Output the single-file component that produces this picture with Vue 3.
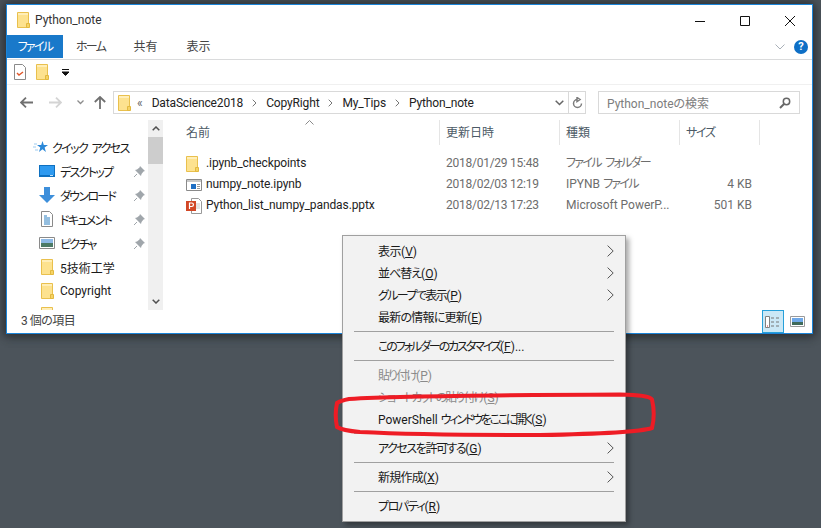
<template>
  <div class="desktop">
    <svg class="defs" width="0" height="0">
      <symbol id="folder" viewBox="0 0 13 16">
        <path d="M.5.5h11v15H.5z" fill="#fde28f" stroke="#e9c04d" />
        <path d="M1 1h10v2H1z" fill="#ffeeb8" />
        <path d="M9.5 15.5v-4h3v4z" fill="#f6d365" stroke="#e2b93f" />
      </symbol>
    </svg>

    <div class="window">
      <div class="titlebar">
        <svg class="title-folder" width="13" height="16"><use href="#folder" /></svg>
        <span class="title-text">Python_note</span>
        <div class="caption">
          <svg width="12" height="12" viewBox="0 0 12 12"><path d="M1 6.5h10" stroke="#111" /></svg>
          <svg width="12" height="12" viewBox="0 0 12 12"><path d="M1.5 1.5h9v9h-9z" fill="none" stroke="#111" /></svg>
          <svg width="12" height="12" viewBox="0 0 12 12"><path d="M1 1l10 10M11 1L1 11" stroke="#111" /></svg>
        </div>
      </div>

      <div class="tabs">
        <div class="tab tab-file kana">ファイル</div>
        <div class="tab tab-home kana">ホーム</div>
        <div class="tab tab-share">共有</div>
        <div class="tab tab-view">表示</div>
        <svg class="ribbon-toggle" width="10" height="6" viewBox="0 0 10 6"><path d="M.5.5L5 5 9.5.5" fill="none" stroke="#a9b0b8" /></svg>
        <div class="help">?</div>
      </div>

      <div class="qat">
        <svg width="12" height="16" viewBox="0 0 12 16">
          <path d="M.5.5h8l3 3v12H.5z" fill="#fff" stroke="#8a8a8a" />
          <path d="M3 9l2 2 4-3" fill="none" stroke="#e0572a" stroke-width="1.4" />
        </svg>
        <svg class="qat-folder" width="13" height="16"><use href="#folder" /></svg>
        <svg class="qat-drop" width="7" height="7" viewBox="0 0 7 7"><path d="M0 .5h7M0 3h7l-3.5 3.5z" stroke="#111" fill="#111" /></svg>
      </div>

      <div class="navbar">
        <svg class="nav-back" width="13" height="11" viewBox="0 0 13 11"><path d="M6 .7L1 5.500l5 4.800M1 5.500h12" fill="none" stroke="#707070" stroke-width="1.800" /></svg>
        <svg class="nav-forward" width="13" height="11" viewBox="0 0 13 11"><path d="M7 .7l5 4.800-5 4.800M12 5.500H0" fill="none" stroke="#d4d4d4" stroke-width="1.800" /></svg>
        <svg class="nav-recent" width="7" height="5" viewBox="0 0 7 5"><path d="M.5.5l3 3 3-3" fill="none" stroke="#8c8c8c" stroke-width="1.300" /></svg>
        <svg class="nav-up" width="12" height="13" viewBox="0 0 12 13"><path d="M.8 6L6 1l5.200 5M6 1v12" fill="none" stroke="#707070" stroke-width="1.800" /></svg>

        <div class="address">
          <svg class="addr-folder" width="13" height="16"><use href="#folder" /></svg>
          <span class="addr-more">«</span>
          <template v-for="(part, i) in crumbs" :key="part">
            <svg v-if="i" width="5" height="8" viewBox="0 0 5 8"><path d="M.7.7L4 4 .7 7.300" fill="none" stroke="#777" /></svg>
            <span class="crumb">{{ part }}</span>
          </template>
          <svg class="addr-drop" width="9" height="6" viewBox="0 0 9 6"><path d="M.7.7l3.800 3.800L8.300.7" fill="none" stroke="#666" stroke-width="1.500" /></svg>
          <div class="addr-refresh">
            <svg width="11" height="12" viewBox="0 0 11 12"><path d="M5.500 2.500a4 4 0 1 0 4 4M5 .5v4l3-2z" fill="none" stroke="#7c7c7c" stroke-width="1.500" /></svg>
          </div>
        </div>

        <div class="search">
          <span>Python_noteの検索</span>
          <svg width="12" height="12" viewBox="0 0 12 12"><circle cx="7.500" cy="4.500" r="3.200" fill="none" stroke="#666" stroke-width="1.500" /><path d="M5 7l-4 4" stroke="#666" stroke-width="2" /></svg>
        </div>
      </div>

      <div class="main">
        <div class="nav-pane">
          <div class="tree">
            <div class="tree-head">
              <svg width="16" height="14" viewBox="0 0 16 14"><path d="M9.500 1l1.300 4H15l-3.400 2.600 1.300 4.400-3.400-2.700L6 12l1.300-4.400L4 5h4.200z" fill="#2b88d8" /><path d="M1 4h3M0 7h3M2 10h3" stroke="#9ccbf0" /></svg>
              <span class="quick">クイック アクセス</span>
            </div>
            <div v-for="item in tree" :key="item.label" class="tree-item">
              <span class="tree-icon">
                <svg v-if="item.icon === 'desktop'" width="16" height="12" viewBox="0 0 16 12"><path d="M0 0h16v12H0z" fill="#0e70c0" /><path d="M1 1h14v9H1z" fill="#2e9af0" /><path d="M11 10.500h3" stroke="#bfe0f8" /></svg>
                <svg v-else-if="item.icon === 'download'" width="16" height="16" viewBox="0 0 16 16"><path d="M5 0h6v8h5l-8 8-8-8h5z" fill="#3d8fdb" /></svg>
                <svg v-else-if="item.icon === 'docs'" width="12" height="16" viewBox="0 0 12 16"><path d="M.5.5h8l3 3v12H.5z" fill="#fff" stroke="#8a8a8a" /><path d="M3 5h3M3 7h6M3 9h6M3 11h6M3 13h6" stroke="#2a7fc0" /></svg>
                <svg v-else-if="item.icon === 'pictures'" width="16" height="12" viewBox="0 0 16 12"><path d="M.5.5h15v11H.5z" fill="#fff" stroke="#8a8a8a" /><path d="M2 2h12v4H2z" fill="#8db9e6" /><path d="M2 6h12v4H2z" fill="#4c7a66" /></svg>
                <svg v-else width="13" height="16"><use href="#folder" /></svg>
              </span>
              <span class="tree-label" :class="{ kana: item.pinned }">{{ item.label }}</span>
              <svg v-if="item.pinned" class="pin" width="11" height="11" viewBox="0 0 11 11"><path d="M6 0l5 5-1.500.5L7.500 8 7 10 1 4l2-.5L5.500 1.500z" fill="#a0a6ab" /><path d="M3 8L0 11" stroke="#a0a6ab" /></svg>
            </div>
            <div class="tree-item">
              <span class="tree-icon"><svg width="13" height="16"><use href="#folder" /></svg></span>
            </div>
          </div>
          <div class="scrollbar">
            <div class="scroll-btn"><svg width="8" height="5" viewBox="0 0 8 5"><path d="M.7 4.300L4 1l3.300 3.300" fill="none" stroke="#505050" stroke-width="1.500" /></svg></div>
            <div class="scroll-thumb"></div>
            <div class="scroll-space"></div>
            <div class="scroll-btn"><svg width="8" height="5" viewBox="0 0 8 5"><path d="M.7.7L4 4 7.300.7" fill="none" stroke="#505050" stroke-width="1.500" /></svg></div>
          </div>
        </div>

        <div class="files">
          <svg class="sort" width="9" height="5" viewBox="0 0 9 5"><path d="M.5 4.500l4-4 4 4" fill="none" stroke="#8a8a8a" /></svg>
          <div class="file-head">
            <div class="col-name">名前</div>
            <div>更新日時</div>
            <div>種類</div>
            <div class="head-size">サイズ</div>
          </div>
          <div v-for="file in files" :key="file.name" class="file-row">
            <div class="col-name">
              <span class="file-icon">
                <svg v-if="file.icon === 'folder'" width="13" height="16"><use href="#folder" /></svg>
                <svg v-else-if="file.icon === 'ipynb'" width="16" height="12" viewBox="0 0 16 12"><path d="M.5.5h15v11H.5z" fill="#fff" stroke="#8a8a8a" /><path d="M1 1h14v2H1z" fill="#c9c9c9" /><path d="M5 5h5v5H5z" fill="#1f6fc4" /><path d="M11 5.500h3M11 7.500h3M11 9.500h3" stroke="#999" /></svg>
                <svg v-else width="16" height="16" viewBox="0 0 16 16"><path d="M5.500.5h7l3 3v12h-10z" fill="#fff" stroke="#999" /><path d="M10 6h4M10 8h4M10 10h4" stroke="#c9c9c9" /><path d="M0 3h10v10H0z" fill="#d24726" /><path d="M3.500 11V5h2.200a1.500 1.500 0 0 1 0 3.500H3.500" fill="none" stroke="#fff" stroke-width="1.200" /></svg>
              </span>
              <span class="file-name">{{ file.name }}</span>
            </div>
            <div class="col-date">{{ file.date }}</div>
            <div>{{ file.typeLatin }}<span :class="{ kana: file.icon !== 'pptx' }">{{ file.type }}</span></div>
            <div class="col-size">{{ file.size }}</div>
          </div>
        </div>
      </div>

      <div class="status">
        <span class="status-count">3 個の項目</span>
        <div class="view-btn view-active">
          <svg width="16" height="12" viewBox="0 0 16 12"><path d="M.5.500h4v11h-4z" fill="#fff" stroke="#808080" /><path d="M6 2h3M11 2h3M6 6h3M11 6h3M6 10h3M11 10h3" stroke="#777" /><path d="M2 9.500h1v1H2z" fill="#c33" /></svg>
        </div>
        <div class="view-btn">
          <svg width="15" height="11" viewBox="0 0 15 11"><path d="M.5.500h14v10H.5z" fill="#fff" stroke="#9a9a9a" /><path d="M2 2h11v4H2z" fill="#6fa8e8" /><path d="M2 6h11v3H2z" fill="#3f6a5a" /></svg>
        </div>
      </div>
    </div>

    <div class="menu">
      <template v-for="(entry, i) in menu" :key="i">
        <div v-if="entry.sep" class="menu-sep"></div>
        <div v-else class="menu-item" :class="{ disabled: entry.disabled }">
          <span class="menu-label">{{ entry.latin }}<span :style="{ letterSpacing: entry.ls + 'px' }">{{ entry.label }}</span>(<u>{{ entry.key }}</u>){{ entry.tail }}</span>
          <svg v-if="entry.sub" class="menu-arrow" width="7" height="12" viewBox="0 0 7 12"><path d="M.6.600L6.200 6 .6 11.400" fill="none" stroke="#555" /></svg>
        </div>
      </template>
    </div>

    <svg class="marker" width="821" height="528" viewBox="0 0 821 528">
      <path d="M349 399C400 396 520 395 620 394.500C640 395 650 396 652 399.500C654 408 654 420 652 428C640 432 600 434 540 435C470 435 400 434 360 432C348 431 340 429 337 427C335.500 420 335.500 410 337 403C340 401 344 400 349 399Z" fill="none" stroke="#ee1c25" stroke-width="4" />
    </svg>
  </div>
</template>

<script setup>
const crumbs = ['DataScience2018', 'CopyRight', 'My_Tips', 'Python_note']

const tree = [
  { label: 'デスクトップ', icon: 'desktop', pinned: true },
  { label: 'ダウンロード', icon: 'download', pinned: true },
  { label: 'ドキュメント', icon: 'docs', pinned: true },
  { label: 'ピクチャ', icon: 'pictures', pinned: true },
  { label: '5技術工学', icon: 'folder' },
  { label: 'Copyright', icon: 'folder' },
]

const files = [
  { name: '.ipynb_checkpoints', date: '2018/01/29 15:48', type: 'ファイル フォルダー', size: '', icon: 'folder' },
  { name: 'numpy_note.ipynb', date: '2018/02/03 12:19', typeLatin: 'IPYNB ', type: 'ファイル', size: '4 KB', icon: 'ipynb' },
  { name: 'Python_list_numpy_pandas.pptx', date: '2018/02/13 17:23', type: 'Microsoft PowerP...', size: '501 KB', icon: 'pptx' },
]

// ls: the kana in the reference's UI font are narrower than Noto's, so each row gets its own tracking
const menu = [
  { label: '表示', key: 'V', sub: true, ls: -0.5 },
  { label: '並べ替え', key: 'O', sub: true, ls: -1 },
  { label: 'グループで表示', key: 'P', sub: true, ls: -1.6 },
  { label: '最新の情報に更新', key: 'E', ls: -0.75 },
  { sep: true },
  { label: 'このフォルダーのカスタマイズ', key: 'F', tail: '...', ls: -2.1 },
  { sep: true },
  { label: '貼り付け', key: 'P', disabled: true, ls: -1.9 },
  { label: 'ショートカットの貼り付け', key: 'S', disabled: true, ls: -1.9 },
  { latin: 'PowerShell ', label: 'ウィンドウをここに開く', key: 'S', ls: -2.2 },
  { sep: true },
  { label: 'アクセスを許可する', key: 'G', sub: true, ls: -1.45 },
  { sep: true },
  { label: '新規作成', key: 'X', sub: true, ls: -0.75 },
  { sep: true },
  { label: 'プロパティ', key: 'R', ls: -1.4 },
]
</script>

<style>
html, body {
  margin: 0;
  background: #4a5259;
}
</style>

<style scoped>
.desktop {
  position: relative;
  width: 821px;
  height: 528px;
  overflow: hidden;
  padding: 4px 0 0 6px;
  box-sizing: border-box;
  background: #4c545b;
  font-family: Roboto, "Noto Sans CJK JP", sans-serif;
  font-feature-settings: "palt";
  font-size: 12px;
  color: #1a1a1a;
}
.defs {
  position: absolute;
}
.kana {
  letter-spacing: -1.7px;
  word-spacing: 3px;
}
.window {
  width: 807px;
  height: 330px;
  box-sizing: border-box;
  border: 1px solid #1a84d8;
  background: #fff;
  display: flex;
  flex-direction: column;
  box-shadow: 0 -2px 8px #33383d, -2px 2px 8px #33383d, 2px 2px 8px #33383d;
}
.titlebar {
  height: 30px;
  display: flex;
  align-items: center;
  flex: none;
}
.title-folder {
  margin-left: 10px;
}
.title-text {
  margin-left: 5px;
  color: #333;
}
.caption {
  margin-left: auto;
  display: flex;
  gap: 33px;
  padding-right: 16px;
  padding-top: 1px;
}
.tabs {
  height: 24px;
  flex: none;
  display: flex;
  align-items: stretch;
  border-bottom: 1px solid #dadbdc;
}
.tab {
  width: 55px;
  height: 23px;
  line-height: 25px;
  text-align: center;
  color: #444;
}
.tab-file {
  width: 56px;
  background: #1979ca;
  color: #fff;
}
.tab-view {
  margin-left: -2px;
}
.ribbon-toggle {
  margin-left: auto;
  align-self: center;
  margin-right: 9px;
}
.help {
  align-self: center;
  width: 14px;
  height: 14px;
  margin-right: 4px;
  border-radius: 50%;
  background: #0e6fc6;
  color: #fff;
  font-size: 11px;
  font-weight: 700;
  line-height: 14px;
  text-align: center;
}
.qat {
  height: 24px;
  flex: none;
  display: flex;
  align-items: center;
  padding-left: 7px;
  border-bottom: 1px solid #f0f0f0;
}
.qat-folder {
  margin-left: 10px;
}
.qat-drop {
  margin-left: 13px;
}
.navbar {
  height: 35px;
  flex: none;
  display: flex;
  align-items: center;
  padding-left: 13px;
}
.nav-forward {
  margin-left: 16px;
}
.nav-recent {
  margin-left: 15px;
}
.nav-up {
  margin-left: 10px;
}
.address {
  margin-left: 7px;
  width: 473px;
  height: 23px;
  box-sizing: border-box;
  border: 1px solid #d9d9d9;
  display: flex;
  align-items: center;
  gap: 9px;
  padding-left: 4px;
  color: #222;
}
.addr-folder {
  margin-right: -3px;
}
.addr-more {
  color: #666;
}
.crumb {
  letter-spacing: -0.15px;
}
.addr-drop {
  margin-left: auto;
  margin-right: -5px;
}
.addr-refresh {
  width: 16px;
  height: 100%;
  border-left: 1px solid #d9d9d9;
  display: flex;
  align-items: center;
  justify-content: center;
}
.search {
  margin-left: 12px;
  width: 202px;
  height: 23px;
  box-sizing: border-box;
  border: 1px solid #d9d9d9;
  display: flex;
  align-items: center;
  justify-content: space-between;
  padding: 0 8px;
  color: #7d7d7d;
}
.main {
  flex: 1;
  min-height: 0;
  display: flex;
}
.nav-pane {
  width: 156px;
  flex: none;
  display: flex;
}
.tree {
  flex: 1;
  overflow: hidden;
  padding-top: 15px;
}
.tree-head {
  height: 24px;
  display: flex;
  align-items: center;
  gap: 3px;
  padding-left: 26px;
  white-space: nowrap;
  color: #1a1a1a;
}
.quick {
  letter-spacing: -1.6px;
  word-spacing: 3px;
}
.tree-item {
  height: 24px;
  display: flex;
  align-items: center;
  padding-left: 32px;
}
.tree-icon {
  width: 16px;
  display: flex;
  justify-content: center;
  flex: none;
}
.tree-label {
  margin-left: 5px;
  white-space: nowrap;
}
.pin {
  margin-left: auto;
  margin-right: 3px;
}
.scrollbar {
  width: 15px;
  flex: none;
  background: #f0f0f0;
  display: flex;
  flex-direction: column;
}
.scroll-btn {
  height: 17px;
  flex: none;
  display: flex;
  align-items: center;
  justify-content: center;
}
.scroll-thumb {
  height: 27px;
  flex: none;
  background: #cdcdcd;
}
.scroll-space {
  flex: 1;
}
.files {
  position: relative;
  flex: 1;
  min-width: 0;
  padding-left: 4px;
}
.sort {
  position: absolute;
  left: 142px;
  top: 0;
}
.file-head,
.file-row {
  display: grid;
  grid-template-columns: 273px 120px 120px 80px;
}
.file-head {
  height: 25px;
  margin-bottom: 8px;
  line-height: 27px;
  color: #4c5a66;
}
.file-head > div {
  height: 25px;
  padding-left: 6px;
  border-right: 1px solid #e5e5e5;
}
.file-head > .col-name {
  padding-left: 19px;
}
.file-head > .head-size {
  letter-spacing: -1.3px;
}
.file-row {
  height: 21px;
  line-height: 21px;
  color: #6d6d6d;
}
.file-row > div {
  padding-left: 6px;
  white-space: pre;
}
.file-row > .col-name {
  display: flex;
  align-items: center;
  padding-left: 19px;
  color: #222;
}
.file-icon {
  width: 20px;
  display: flex;
  flex: none;
}
.file-name {
  letter-spacing: -0.1px;
}
.col-date {
  letter-spacing: -0.25px;
}
.file-row > .col-size {
  text-align: right;
  padding-right: 8px;
}
.status {
  height: 23px;
  flex: none;
  display: flex;
  align-items: stretch;
  padding-left: 14px;
  color: #444;
}
.status-count {
  line-height: 23px;
  margin-right: auto;
  letter-spacing: -0.5px;
}
.view-btn {
  width: 22px;
  box-sizing: border-box;
  display: flex;
  align-items: center;
  justify-content: center;
  margin-right: 4px;
}
.view-active {
  margin-right: 2px;
  background: #cbe8f6;
  border: 1px solid #26a0da;
}
.menu {
  position: absolute;
  left: 342px;
  top: 235px;
  width: 284px;
  height: 287px;
  box-sizing: border-box;
  padding: 4px 0;
  background: #f2f2f2;
  border: 1px solid #a0a0a0;
  box-shadow: 3px 3px 5px rgba(0, 0, 0, 0.35);
}
.menu-item {
  height: 22px;
  display: flex;
  align-items: center;
  padding-left: 35px;
  color: #1a1a1a;
  white-space: pre;
}
.menu-item.disabled {
  color: #8a8a8a;
}
.menu-label {
  margin-top: -2px;
}
.menu-arrow {
  margin-left: auto;
  margin-right: 11px;
}
.menu-sep {
  height: 1px;
  margin: 3px 11px;
  background: #a0a0a0;
}
.marker {
  position: absolute;
  left: 0;
  top: 0;
  pointer-events: none;
}
</style>
